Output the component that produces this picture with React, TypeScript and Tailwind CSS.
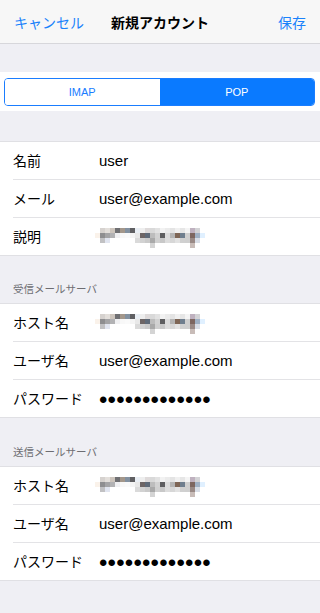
import React from "react";

const FONT = "[font-family:'Liberation_Sans','Noto_Sans_CJK_JP',sans-serif]";

const mosaicRows: (string | null)[][] = [
  [null, "#d6d2cf", "#e3dfdb", "#cdc5bd", "#6f6f72", "#a3978b", "#8391a0", "#5f5f62", "#e9eef4", "#eeeeee", "#dedada", "#d9d9d9", "#e2e2e2", "#f2f2f2", "#ebebeb", "#e4e4e4", "#f0f0f0", "#e6e6e6", "#f4f4f4", "#bfb1bf", "#d3d3d6", null],
  ["#faf2ea", "#8e8e90", "#a4a4a6", "#b2b2b4", "#f0f0f2", "#f8f8f8", "#fafafa", "#f4f4f4", "#e8e8e8", "#6d6565", "#5f6a78", "#bdbdbd", "#d2d2d2", "#5e5e60", "#dcdcdc", "#b4b4b4", "#7e6656", "#6f7e8e", "#cfcfcf", "#7d6660", "#9fb0c4", "#e0f0ff"],
  [null, "#c1c1c3", "#e1e5f0", null, null, null, null, null, "#dadada", "#d2d2d2", "#cacaca", "#a9a9a9", "#d0d0d0", "#c8c8c8", "#dddddd", "#d7d7d7", "#e2e2e2", "#d0d0d0", "#cfcfcf", "#998985", "#d8dde6", null],
  [null, null, null, null, null, null, null, null, null, null, null, "#d4d4d4", null, null, null, null, null, null, null, "#c8bcb8", null, null],
];

function Mosaic() {
  return (
    <svg width="110" height="20" viewBox="0 0 110 20" className="-ml-[4px] block">
      {mosaicRows.map((row, r) =>
        row.map((c, i) =>
          c ? <rect key={`${r}-${i}`} x={i * 5} y={r * 5} width="5" height="5" fill={c} /> : null
        )
      )}
    </svg>
  );
}

function Dots() {
  return (
    <span className="text-[24px] leading-[20px] tracking-[0.2px] text-black [font-family:'Liberation_Sans',sans-serif]">
      •••••••••••••
    </span>
  );
}

type Row = { label: string; value: React.ReactNode };

function Section({ rows }: { rows: Row[] }) {
  return (
    <div className="bg-white border-y border-[#e0e0e4]">
      {rows.map((r, i) => {
        const last = i === rows.length - 1;
        return (
          <div key={i} className="pl-[13px]">
            <div
              className={`flex items-center pt-[2px] ${last ? "h-[37px]" : "h-[38px] border-b border-[#e3e3e6]"}`}
            >
              <div className="w-[86px] shrink-0 text-[14px] text-black">{r.label}</div>
              <div className="text-[15px] text-black flex items-center">{r.value}</div>
            </div>
          </div>
        );
      })}
    </div>
  );
}

function Header({ text, tall }: { text: string; tall?: boolean }) {
  return (
    <div className={`${tall ? "h-[48px]" : "h-[47px]"} flex items-end pl-[13px] pb-[7px]`}>
      <span className="text-[10.5px] leading-[14px] text-[#6d6d72]">{text}</span>
    </div>
  );
}

export default function App() {
  return (
    <div className={`min-h-screen w-[320px] bg-[#efeff4] ${FONT}`}>
      <div className="h-[44px] bg-[#f7f7f7] border-b border-[#d7d7db] grid grid-cols-[1fr_auto_1fr] items-center px-[14px] pt-[3px]">
        <span className="text-[14px] text-[#1a82fb] justify-self-start">キャンセル</span>
        <span className="text-[14px] font-bold text-black">新規アカウント</span>
        <span className="text-[14px] text-[#1a82fb] justify-self-end">保存</span>
      </div>
      <div className="h-[28px]" />
      <div className="bg-white pt-[6px] pb-[5px] pl-[4px] pr-[5px]">
        <div className="h-[28px] flex rounded-[4px] border border-[#1a7dff] overflow-hidden">
          <div className="flex-1 flex items-center justify-center bg-white text-[11px] text-[#1a7dff]">
            IMAP
          </div>
          <div className="flex-1 flex items-center justify-center bg-[#0a7aff] text-[11px] text-white">
            POP
          </div>
        </div>
      </div>
      <div className="h-[30px]" />
      <Section
        rows={[
          { label: "名前", value: "user" },
          { label: "メール", value: "user@example.com" },
          { label: "説明", value: <Mosaic /> },
        ]}
      />
      <Header text="受信メールサーバ" />
      <Section
        rows={[
          { label: "ホスト名", value: <Mosaic /> },
          { label: "ユーザ名", value: "user@example.com" },
          { label: "パスワード", value: <Dots /> },
        ]}
      />
      <Header text="送信メールサーバ" tall />
      <Section
        rows={[
          { label: "ホスト名", value: <Mosaic /> },
          { label: "ユーザ名", value: "user@example.com" },
          { label: "パスワード", value: <Dots /> },
        ]}
      />
    </div>
  );
}
